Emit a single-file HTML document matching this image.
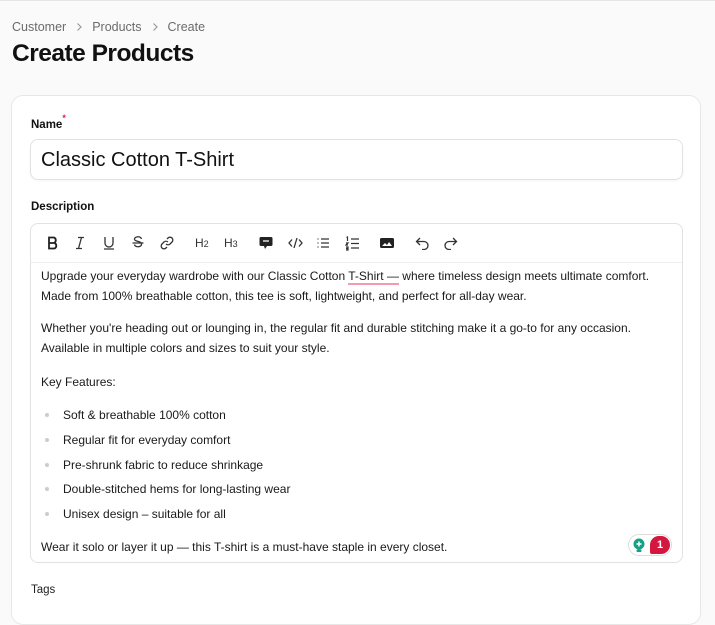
<!DOCTYPE html>
<html><head><meta charset="utf-8"><style>
*{box-sizing:border-box;margin:0;padding:0}
body{width:715px;height:602px;overflow:hidden;background:#fafafa;font-family:"Liberation Sans",sans-serif;color:#111;position:relative}
.top{position:absolute;left:0;top:0;width:715px;height:1px;background:#e5e5e5}
.bc{position:absolute;left:12px;top:20px;font-size:12.5px;color:#6b6b6b}
.bc svg{margin:0 9px;vertical-align:-1px}
h1{position:absolute;left:12px;top:40px;font-size:24.5px;font-weight:bold;letter-spacing:-0.5px}
.card{position:absolute;left:11px;top:95px;width:690px;height:530px;background:#fff;border:1px solid #e7e7e7;border-radius:12px}
.lbl{position:absolute;left:31px;font-size:11.5px;font-weight:bold;color:#111}
.lbl sup{color:#e11d48;font-size:9px;position:relative;top:-2px}
.inp{position:absolute;left:30px;top:139px;width:653px;height:41px;border:1px solid #e2e2e2;border-radius:8px;font-size:20px;padding:9px 10px;box-shadow:0 1px 2px rgba(0,0,0,.04)}
.ed{position:absolute;left:30px;top:223px;width:653px;height:340px;border:1px solid #e2e2e2;border-radius:8px}
.tb{height:39px;border-bottom:1px solid #eee;position:relative}
.tb svg{position:absolute;top:12px}
.txt{position:absolute;left:10px;top:42px;font-size:12px;line-height:20px;color:#1a1a1a;width:618px}
.txt p{margin-bottom:12px}
.txt li{list-style:none;position:relative;padding-left:22px;height:24.75px;line-height:20px}
.txt li:before{content:"";position:absolute;left:4px;top:8px;width:4px;height:4px;border-radius:50%;background:#ccc}
u{text-decoration:none;border-bottom:2px solid #f59aaa}
.badge{position:absolute;left:628px;top:534px;width:44px;height:22px;border:1px solid #ddd;border-radius:11px;background:#fff}
.red{position:absolute;right:1px;top:1px;width:20px;height:18px;background:#d4173f;border-radius:9px 9px 9px 2px;color:#fff;font-size:11px;font-weight:bold;text-align:center;line-height:18px}
</style></head><body>
<div class="top"></div>
<div class="bc">Customer<svg width="8" height="10" viewBox="0 0 8 10" fill="none" stroke="#999" stroke-width="1.2"><path d="M2.5 1.5 6 5 2.5 8.5"/></svg>Products<svg width="8" height="10" viewBox="0 0 8 10" fill="none" stroke="#999" stroke-width="1.2"><path d="M2.5 1.5 6 5 2.5 8.5"/></svg>Create</div>
<h1>Create Products</h1>
<div class="card"></div>
<div class="lbl" style="top:115px">Name<sup>*</sup></div>
<div class="inp">Classic Cotton T-Shirt</div>
<div class="lbl" style="top:201px">Description</div>
<div class="ed">
<div class="tb">
<svg style="left:15px" width="14" height="14" viewBox="0 0 14 14" fill="none" stroke="#222" stroke-width="1.8"><path d="M3 1.5h5a3 3 0 0 1 0 5.5H3zM3 7h5.5a3 3 0 0 1 0 5.5H3z"/></svg>
<svg style="left:42px" width="14" height="14" viewBox="0 0 14 14" fill="none" stroke="#333" stroke-width="1.3"><path d="M5 1.5h6M3 12.5h6M8.5 1.5l-3 11"/></svg>
<svg style="left:71px" width="14" height="14" viewBox="0 0 14 14" fill="none" stroke="#333" stroke-width="1.3"><path d="M3 1v6a4 4 0 0 0 8 0V1M2 13h10"/></svg>
<svg style="left:100px" width="14" height="14" viewBox="0 0 14 14" fill="none" stroke="#333" stroke-width="1.3"><path d="M10.5 3a3.5 2.5 0 0 0-7 .5c0 2 7 1.5 7 4.5a3.5 2.5 0 0 1-7 .5M1.5 7h11"/></svg>
<svg style="left:129px" width="14" height="14" viewBox="0 0 14 14" fill="none" stroke="#333" stroke-width="1.3"><path d="M6 8a3 3 0 0 0 4 0l2-2a2.5 2.5 0 0 0-4-4l-1 1M8 6a3 3 0 0 0-4 0l-2 2a2.5 2.5 0 0 0 4 4l1-1"/></svg>
<div style="position:absolute;left:164px;top:12px;font-size:12px;color:#333">H<span style="font-size:9px">2</span></div>
<div style="position:absolute;left:193px;top:12px;font-size:12px;color:#333">H<span style="font-size:9px">3</span></div>
<svg style="left:228px" width="14" height="14" viewBox="0 0 14 14"><path d="M2 1h10a1.5 1.5 0 0 1 1.5 1.5v6A1.5 1.5 0 0 1 12 10H8l-2 3-1-3H2A1.5 1.5 0 0 1 .5 8.5v-6A1.5 1.5 0 0 1 2 1z" fill="#222"/><path d="M4 5h6" stroke="#fff" stroke-width="1.3"/></svg>
<svg style="left:257px" width="15" height="14" viewBox="0 0 15 14" fill="none" stroke="#333" stroke-width="1.3"><path d="M4 3.5 1 7l3 3.5M11 3.5 14 7l-3 3.5M9 2 6 12"/></svg>
<svg style="left:285px" width="14" height="14" viewBox="0 0 14 14" fill="none" stroke="#333" stroke-width="1.2"><path d="M5 3h8M5 7h8M5 11h8M1.5 3h1M1.5 7h1M1.5 11h1"/></svg>
<svg style="left:314px" width="14" height="15" viewBox="0 0 14 15" fill="none" stroke="#333" stroke-width="1.2"><path d="M6 3h8M6 7.5h8M6 12h8M1.5 1.5l1-.5v4M1 7h2l-2 2h2M1 11h2v3H1M1 12.5h2"/></svg>
<svg style="left:348px" width="16" height="14" viewBox="0 0 16 14"><rect x="1" y="2" width="14" height="10" rx="1.5" fill="#222"/><path d="M3 10l3-3 2 2 2-3 3 4z" fill="#fff"/></svg>
<svg style="left:384px" width="15" height="14" viewBox="0 0 15 14" fill="none" stroke="#333" stroke-width="1.3"><path d="M5 2 1.5 5.5 5 9M1.5 5.5H9a4 4 0 0 1 0 8H7"/></svg>
<svg style="left:412px" width="15" height="14" viewBox="0 0 15 14" fill="none" stroke="#333" stroke-width="1.3"><path d="M10 2l3.5 3.5L10 9M13.5 5.5H6a4 4 0 0 0 0 8h2"/></svg>
</div>
<div class="txt">
<p>Upgrade your everyday wardrobe with our Classic Cotton <u>T-Shirt —</u> where timeless design meets ultimate comfort.<br>Made from 100% breathable cotton, this tee is soft, lightweight, and perfect for all-day wear.</p>
<p style="margin-bottom:14px">Whether you're heading out or lounging in, the regular fit and durable stitching make it a go-to for any occasion.<br>Available in multiple colors and sizes to suit your style.</p>
<p style="margin-bottom:13px">Key Features:</p>
<ul style="margin-bottom:8px"><li>Soft &amp; breathable 100% cotton</li><li>Regular fit for everyday comfort</li><li>Pre-shrunk fabric to reduce shrinkage</li><li>Double-stitched hems for long-lasting wear</li><li>Unisex design – suitable for all</li></ul>
<p>Wear it solo or layer it up — this T-shirt is a must-have staple in every closet.</p>
</div>
</div>
<div class="badge">
<svg style="position:absolute;left:4px;top:3px" width="12" height="15" viewBox="0 0 12 15"><circle cx="6" cy="6" r="5.5" fill="#16a085"/><path d="M6 3.5v5M3.5 6h5" stroke="#fff" stroke-width="1.5"/><rect x="3.5" y="11.5" width="5" height="2.5" rx="1" fill="#16a085"/></svg>
<div class="red">1</div>
</div>
<div class="lbl" style="top:584px;font-weight:normal;color:#222">Tags</div>
</body></html>
